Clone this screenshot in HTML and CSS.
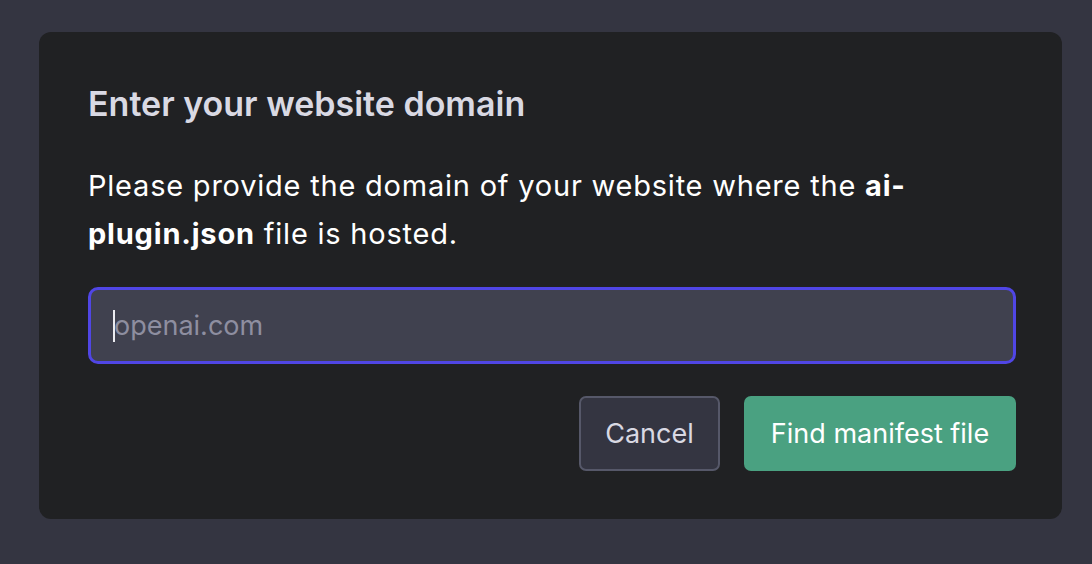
FILE: index.html
```html
<!DOCTYPE html>
<html>
<head>
<meta charset="utf-8">
<link rel="stylesheet" href="styles.css">
</head>
<body>
<div class="dialog">
  <h2 class="title">Enter your website domain</h2>
  <p class="desc">Please provide the domain of your website where the <strong>ai-plugin.json</strong> file is hosted.</p>
  <div class="field"><span class="caret"></span><span class="placeholder">openai.com</span></div>
  <div class="actions">
    <button class="btn btn-cancel">Cancel</button>
    <button class="btn btn-primary">Find manifest file</button>
  </div>
</div>
</body>
</html>
```
FILE: styles.css
```css
html, body { margin: 0; padding: 0; }
body {
  background: #343541;
  font-family: Inter, "Noto Sans", sans-serif;
  padding: 32px 30px 0 39px;
  height: 564px;
  box-sizing: border-box;
}
.dialog {
  background: #202123;
  border-radius: 12px;
  padding: 50px 46px 48px 49px;
  box-sizing: border-box;
  width: 1023px;
  height: 487px;
}
.title {
  margin: 0;
  color: #d9d9e3;
  font-size: 34px;
  font-weight: 600;
  line-height: 44px;
}
.desc {
  margin: 36px 0 0;
  font-size: 29px;
  letter-spacing: 0.78px;
  line-height: 48px;
  color: #fff;
}
.desc strong { font-weight: 700; letter-spacing: 0.8px; }
.field {
  margin-top: 29px;
  height: 77px;
  box-sizing: border-box;
  border: 3px solid #5046e5;
  border-radius: 10px;
  background: #40414f;
  display: flex;
  align-items: center;
  padding-left: 22px;
}
.caret {
  width: 2px;
  height: 32px;
  background: #ececf1;
  margin-right: -1px;
}
.placeholder {
  color: #8e8ea0;
  font-size: 27px;
}
.actions {
  display: flex;
  justify-content: flex-end;
  gap: 24px;
  margin-top: 32px;
}
.btn {
  font-family: inherit;
  font-size: 27px;
  height: 75px;
  border-radius: 7px;
  padding: 0;
  cursor: pointer;
}
.btn-cancel {
  background: #343541;
  border: 2px solid #565869;
  color: #d9d9e3;
  width: 141px;
}
.btn-primary {
  background: #4aa181;
  border: none;
  color: #fff;
  width: 272px;
}
```
